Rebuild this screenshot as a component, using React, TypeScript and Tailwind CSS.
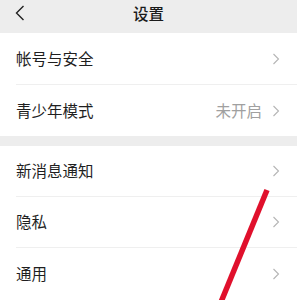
import { ReactNode } from 'react';

const font = { fontFamily: '"Noto Sans CJK SC", "Noto Sans", sans-serif' };

function Chevron() {
  return (
    <svg width="8" height="12" viewBox="0 0 8 12" className="shrink-0">
      <path d="M1.5 1 L6.5 6 L1.5 11" fill="none" stroke="#b5b5b5" strokeWidth="1.1" />
    </svg>
  );
}

function Row({ label, value, divider = true }: { label: string; value?: ReactNode; divider?: boolean }) {
  return (
    <div className="pl-4 bg-white">
      <div className={`flex items-center h-[51px] pr-[17px] ${divider ? 'border-b border-[#efefef]' : ''}`}>
        <span className="flex-1 text-[15.5px] text-[#1f1f1f]">{label}</span>
        {value && <span className="text-[15.5px] text-[#a0a0a0] mr-[10px]">{value}</span>}
        <Chevron />
      </div>
    </div>
  );
}

export default function App() {
  return (
    <div className="relative w-[297px] h-[300px] overflow-hidden bg-white" style={font}>
      {/* Header */}
      <header className="relative h-[33px] bg-[#ededed] flex items-center justify-center pb-[5px]">
        <svg width="10" height="16" viewBox="0 0 10 16" className="absolute left-[15px] top-[5px]">
          <path d="M8.5 1 L1.5 8 L8.5 15" fill="none" stroke="#222" strokeWidth="1.4" />
        </svg>
        <h1 className="text-[15.5px] text-[#1a1a1a] font-medium leading-none">设置</h1>
      </header>

      <div className="pt-[1px]">
        <Row label="帐号与安全" />
        <Row label="青少年模式" value="未开启" divider={false} />
      </div>

      <div className="h-[10px] bg-[#ededed]" />

      <div>
        <Row label="新消息通知" />
        <Row label="隐私" />
        <Row label="通用" divider={false} />
      </div>

      {/* red annotation stroke */}
      <svg width="297" height="300" className="absolute inset-0 pointer-events-none">
        <line x1="267" y1="190" x2="221" y2="302" stroke="#e0102c" strokeWidth="5.5" />
      </svg>
    </div>
  );
}
